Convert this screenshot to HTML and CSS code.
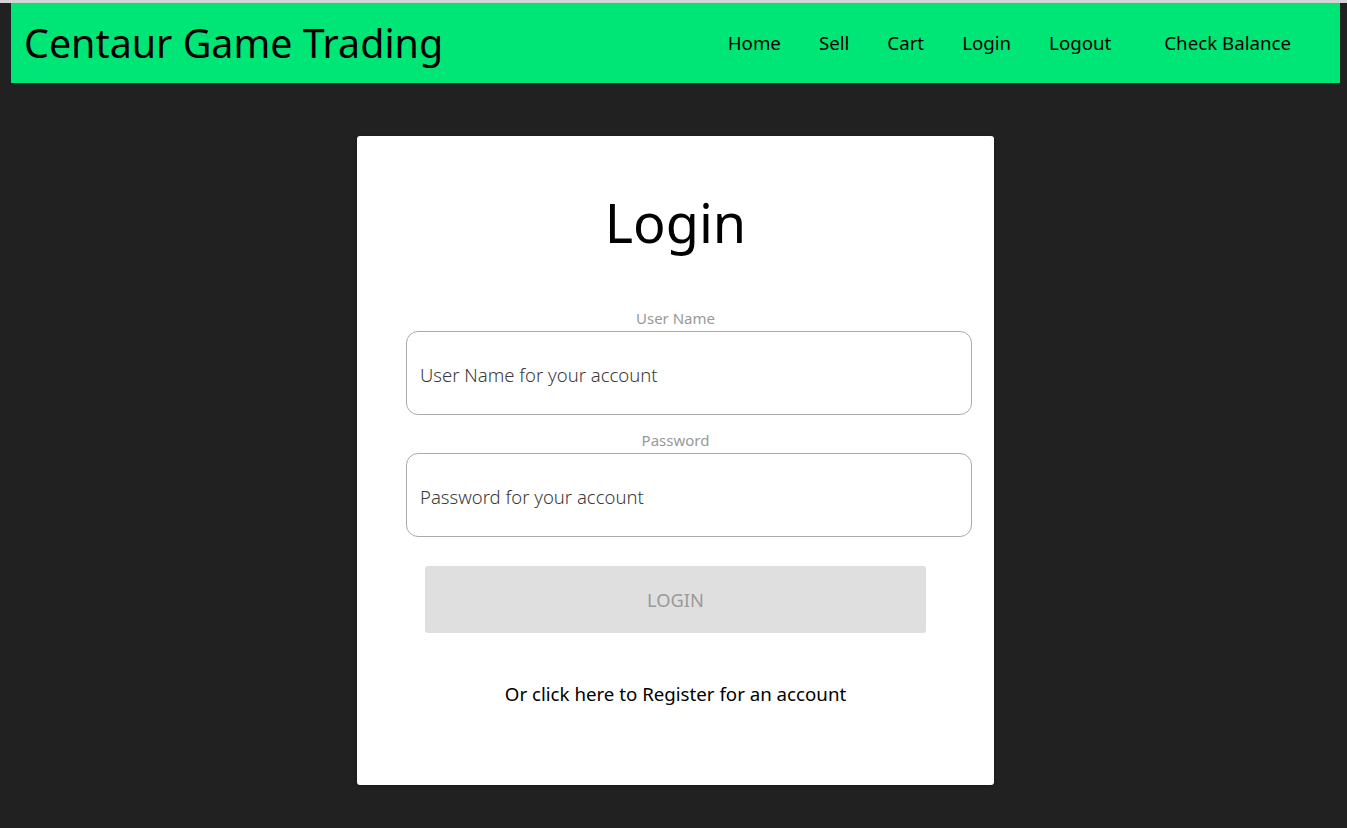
FILE: index.html
```html
<!DOCTYPE html>
<html lang="en">
<head>
<meta charset="utf-8">
<title>Centaur Game Trading</title>
<link rel="stylesheet" href="styles.css">
</head>
<body>
<div class="topline"></div>
<header class="navbar">
  <div class="brand">Centaur Game Trading</div>
  <nav class="links">
    <a href="#">Home</a>
    <a href="#">Sell</a>
    <a href="#">Cart</a>
    <a href="#">Login</a>
    <a href="#">Logout</a>
    <a href="#" class="balance">Check Balance</a>
  </nav>
</header>
<main class="page">
  <section class="card">
    <h1 class="title">Login</h1>
    <label class="label" for="user">User Name</label>
    <input class="field" id="user" type="text" placeholder="User Name for your account">
    <label class="label label-pw" for="pw">Password</label>
    <input class="field" id="pw" type="password" placeholder="Password for your account">
    <button class="btn" type="button" disabled>LOGIN</button>
    <p class="register">Or click here to Register for an account</p>
  </section>
</main>
</body>
</html>
```

FILE: styles.css
```css
html, body {
  margin: 0;
  padding: 0;
}
body {
  background: #212121;
  font-family: "Noto Sans", "Open Sans", sans-serif;
  min-height: 828px;
}
.topline {
  height: 3px;
  background: #d4d4d4;
}
.navbar {
  margin: 0 7px 0 11px;
  height: 80px;
  background: #00e676;
  display: flex;
  align-items: center;
  justify-content: space-between;
  padding: 0 49px 0 13px;
}
.brand {
  font-size: 39.4px;
  color: #000;
  line-height: 1;
  margin-top: 2px;
}
.links {
  display: flex;
  gap: 38px;
  align-items: center;
  margin-bottom: 2px;
}
.links a {
  color: #000;
  text-decoration: none;
  font-size: 18.7px;
}
.links .balance {
  margin-left: 15px;
}
.page {
  display: flex;
  justify-content: center;
  padding: 53px 0 0 4px;
}
.card {
  width: 637px;
  box-sizing: border-box;
  background: #fff;
  border-radius: 3px;
  box-shadow: 0 1px 3px rgba(0,0,0,0.3);
  padding: 50px 0 79px;
  display: flex;
  flex-direction: column;
}
.title {
  margin: 0;
  font-weight: 400;
  font-size: 54px;
  line-height: 72px;
  text-align: center;
  color: #000;
}
.label {
  display: block;
  text-align: center;
  font-size: 15px;
  line-height: 20px;
  color: #999;
  margin: 50px 0 3px;
}
.label-pw {
  margin-top: 15px;
}
.field {
  margin-left: 49px;
  width: 566px;
  height: 84px;
  box-sizing: border-box;
  border: 1px solid #aaa;
  border-radius: 12px;
  padding: 3px 13px 0;
  font-family: "Noto Sans", "Open Sans", sans-serif;
  font-size: 18.5px;
  font-weight: 300;
  background: #fff;
  outline: none;
}
.field::placeholder {
  color: #3a3a3a;
  opacity: 1;
}
.btn {
  margin: 29px 68px 0;
  height: 67px;
  border: none;
  border-radius: 3px;
  background: #dfdfdf;
  color: #9a9a9a;
  font-family: "Noto Sans", "Open Sans", sans-serif;
  font-size: 18.3px;
  padding-top: 0;
}
.register {
  margin: 49px 0 0;
  text-align: center;
  font-size: 18.7px;
  line-height: 24px;
  color: #000;
}
```
